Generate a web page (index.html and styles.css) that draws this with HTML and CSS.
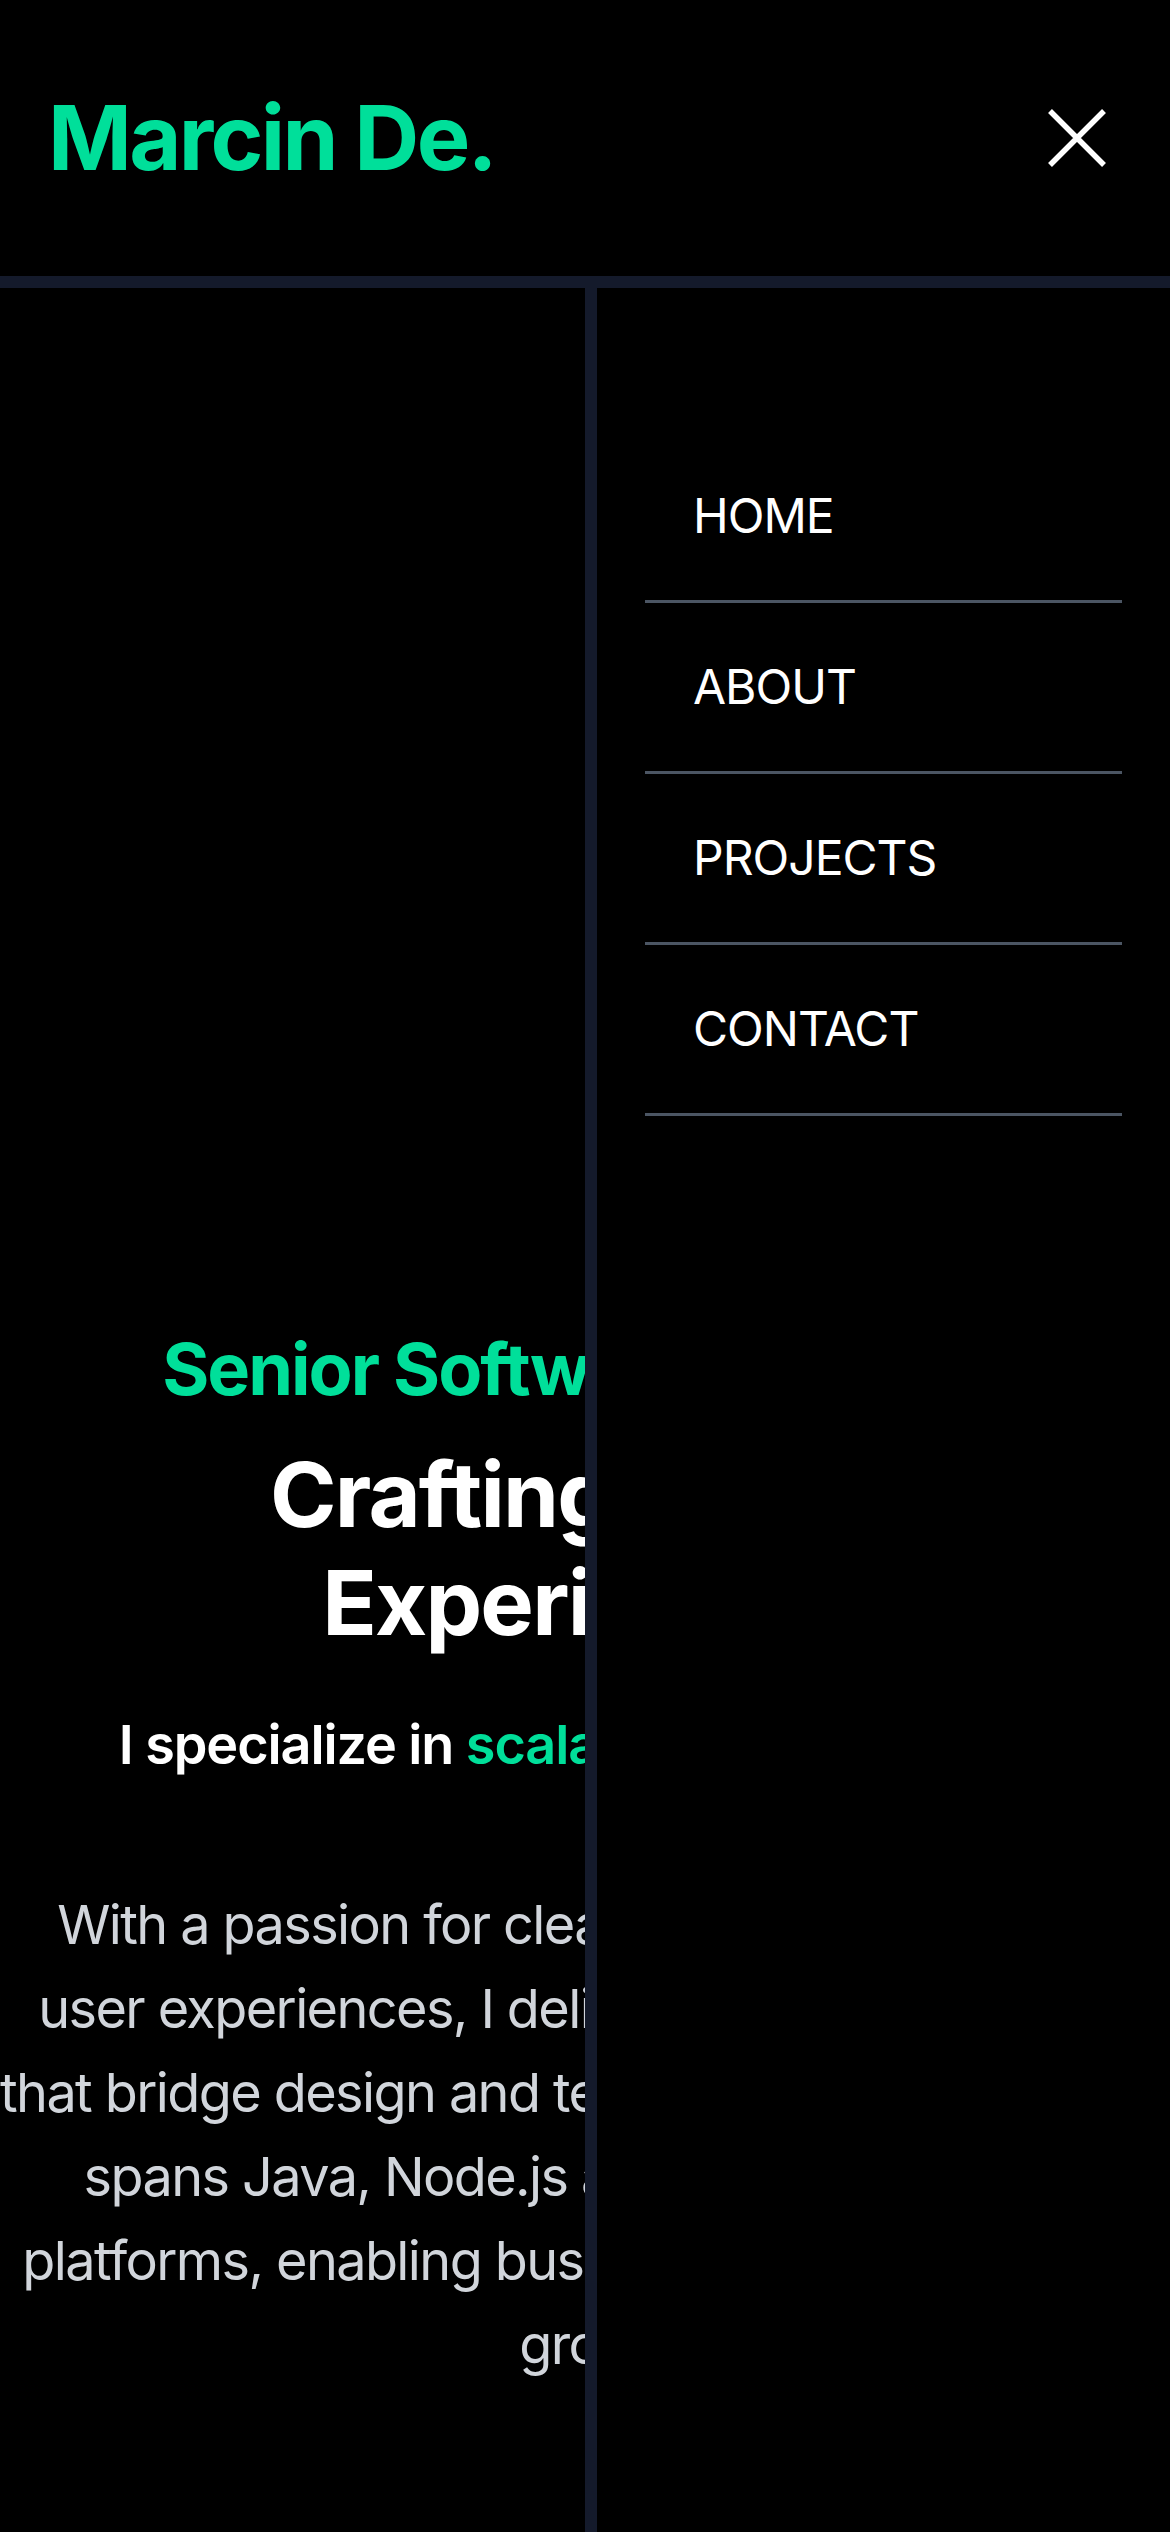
FILE: index.html
```html
<!DOCTYPE html>
<html lang="en">
<head>
<meta charset="utf-8">
<title>Marcin De.</title>
<link rel="stylesheet" href="styles.css">
</head>
<body>
<header class="topbar">
  <h1 class="logo">Marcin De.</h1>
  <button class="close" aria-label="Close menu">
    <svg viewBox="0 0 60 60" width="60" height="60" aria-hidden="true">
      <path d="M3 3 L57 57 M57 3 L3 57" stroke="#ffffff" stroke-width="5.5" fill="none"/>
    </svg>
  </button>
</header>

<main class="hero">
  <p class="role">Senior Software Engineer</p>
  <h2 class="headline">Crafting Digital<br>Experiences</h2>
  <p class="lead">I specialize in <span class="accent">scalable web solutions.</span></p>
  <p class="bio">With a passion for clean code and seamless<br>user experiences, I deliver impactful solutions<br>that bridge design and technologies. My expertise<br>spans Java, Node.js and different modern<br>platforms, enabling businesses to innovate and<br>grow.</p>
</main>

<nav class="drawer">
  <ul class="menu">
    <li class="menu-item"><a class="menu-link" href="#home">Home</a></li>
    <li class="menu-item"><a class="menu-link" href="#about">About</a></li>
    <li class="menu-item"><a class="menu-link" href="#projects">Projects</a></li>
    <li class="menu-item"><a class="menu-link" href="#contact">Contact</a></li>
  </ul>
</nav>
</body>
</html>
```

FILE: styles.css
```css
html, body {
  margin: 0;
  padding: 0;
  background: #000000;
}

body {
  position: relative;
  width: 1170px;
  height: 2532px;
  overflow: hidden;
  font-family: Inter, "Noto Sans", "Liberation Sans", sans-serif;
  color: #ffffff;
}

.topbar {
  box-sizing: border-box;
  height: 288px;
  border-bottom: 12px solid #141a2b;
  display: flex;
  align-items: center;
  justify-content: space-between;
  padding: 0 63px 0 48px;
}

.logo {
  margin: 0;
  font-size: 90px;
  line-height: 108px;
  font-weight: 700;
  color: #00df9a;
  letter-spacing: -2.7px;
}

.close {
  display: block;
  width: 60px;
  height: 60px;
  padding: 0;
  border: 0;
  background: none;
}

.close svg {
  display: block;
}

.hero {
  padding-top: 1033px;
  text-align: center;
}

.role {
  margin: 0 0 24px;
  font-size: 72px;
  line-height: 96px;
  font-weight: 700;
  color: #00df9a;
  letter-spacing: -2px;
}

.headline {
  margin: 0;
  font-size: 90px;
  line-height: 108px;
  font-weight: 700;
  color: #ffffff;
  letter-spacing: -1.8px;
}

.lead {
  margin: 46px 0 0;
  font-size: 54px;
  line-height: 84px;
  font-weight: 600;
  color: #ffffff;
  letter-spacing: -1.1px;
}

.accent {
  color: #00df9a;
}

.bio {
  margin: 96px 0 0;
  font-size: 54px;
  line-height: 84px;
  font-weight: 400;
  color: #d1d5db;
  white-space: nowrap;
  letter-spacing: -1.6px;
}

.drawer {
  position: absolute;
  top: 288px;
  left: 585px;
  bottom: 0;
  width: 585px;
  box-sizing: border-box;
  border-left: 12px solid #141a2b;
  background: #000000;
  padding: 144px 48px 0;
}

.menu {
  list-style: none;
  margin: 0;
  padding: 0;
}

.menu-item {
  border-bottom: 3px solid #4b5563;
}

.menu-link {
  display: block;
  padding: 48px;
  font-size: 48px;
  line-height: 72px;
  font-weight: 400;
  color: #ffffff;
  text-decoration: none;
  text-transform: uppercase;
  letter-spacing: -1px;
}
```
